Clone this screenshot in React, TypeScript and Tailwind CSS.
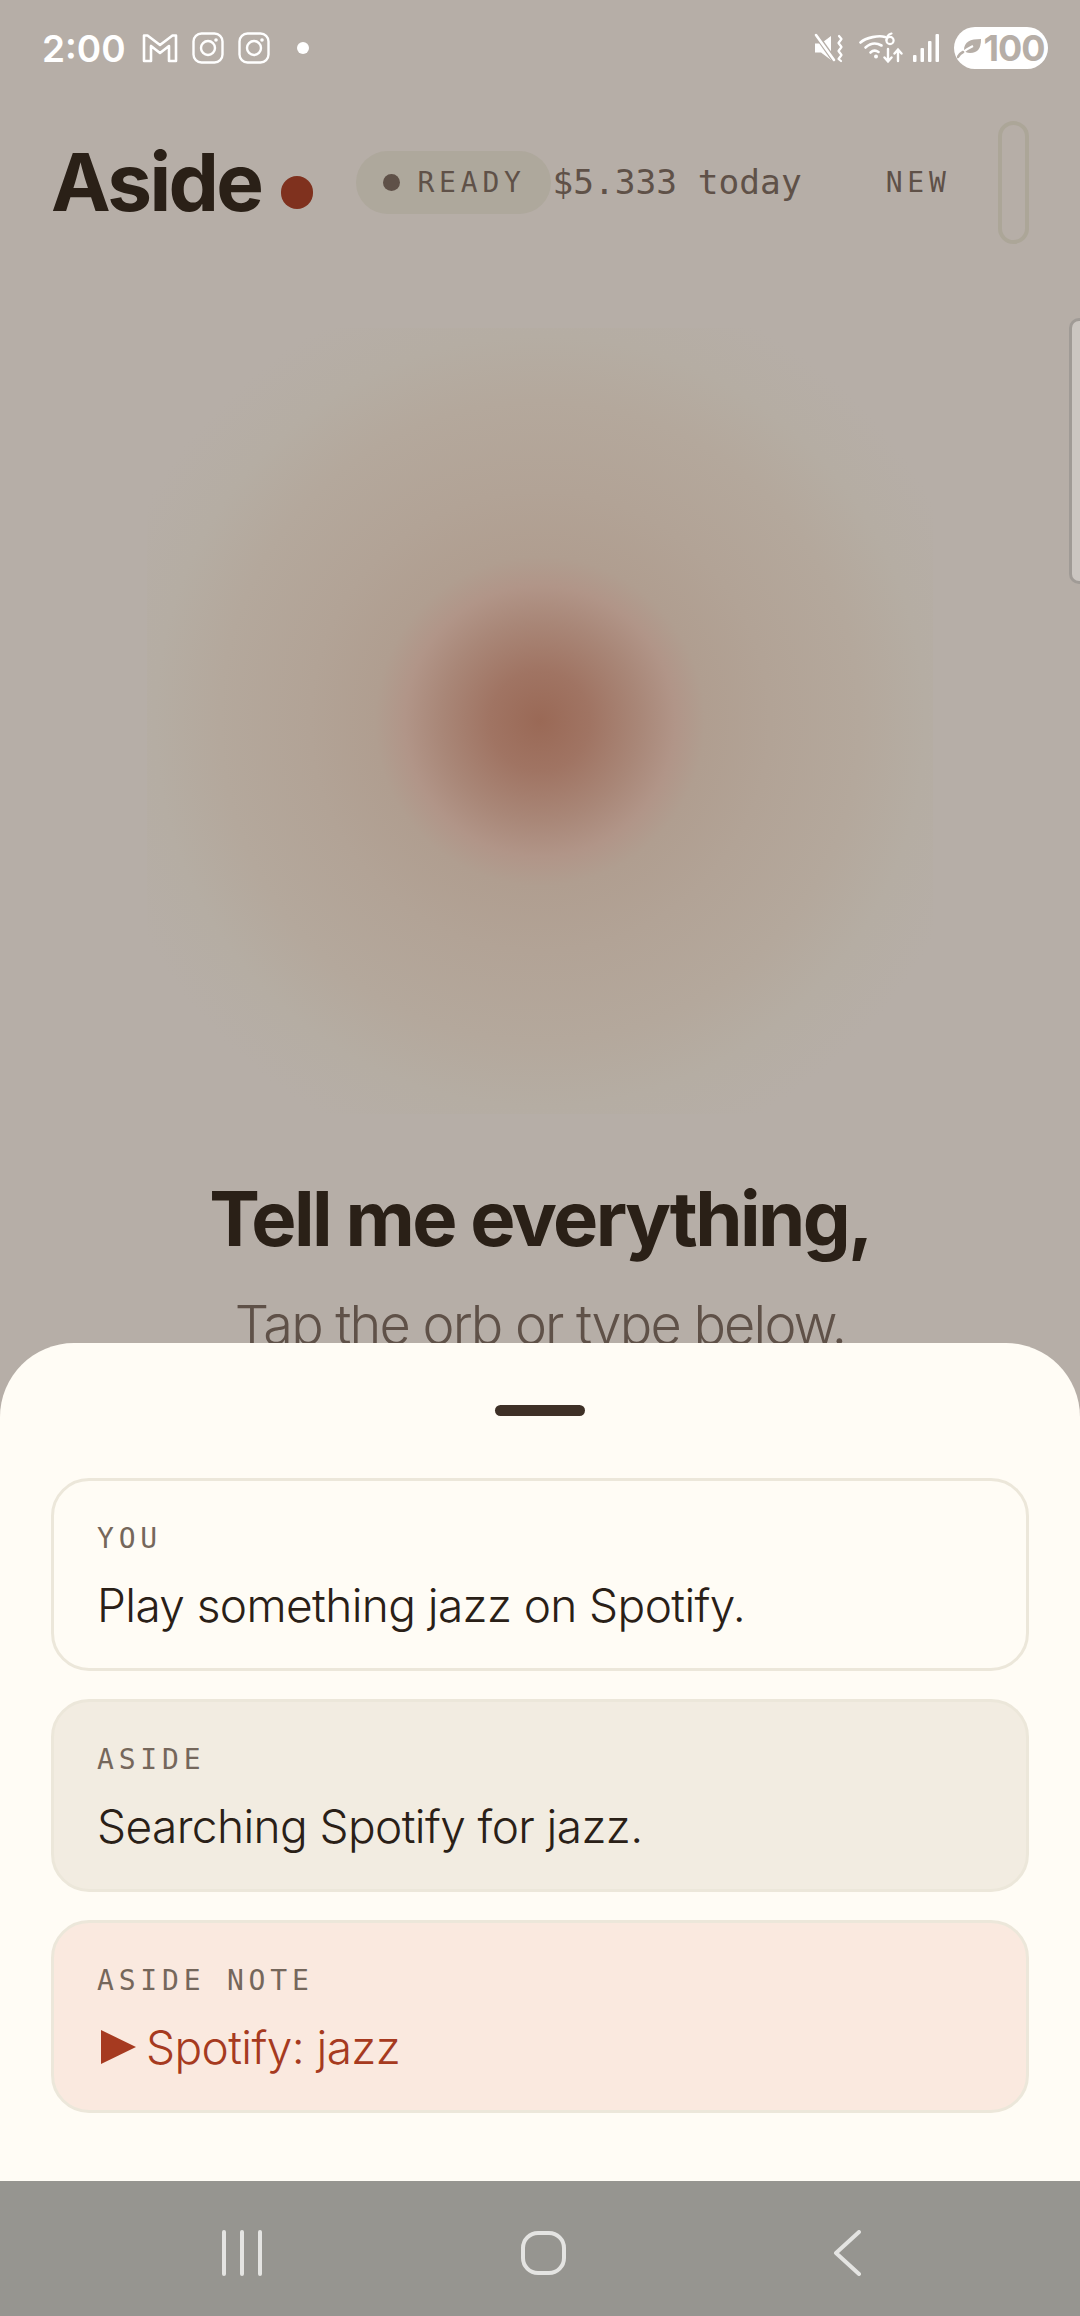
import React from 'react';

const SANS = "font-['Inter','Noto_Sans',sans-serif]";
const MONO = "font-['DejaVu_Sans_Mono',monospace]";

// Status bar glyphs
const GmailIcon = () => (
  <svg width="36" height="30" viewBox="0 0 36 30" fill="none" stroke="#fff" strokeWidth="2.6" strokeLinejoin="round">
    <path d="M2 2.5h3.5L18 12 30.500 2.500H34V28h-7V13l-9 7-9-7v15H2z" />
  </svg>
);

const InstaIcon = () => (
  <svg width="32" height="32" viewBox="0 0 32 32" fill="none" stroke="#fff" strokeWidth="2.400">
    <rect x="1.500" y="1.500" width="29" height="29" rx="8" />
    <circle cx="16" cy="16" r="7" />
    <circle cx="24" cy="8" r="1.800" fill="#fff" stroke="none" />
  </svg>
);

const MuteIcon = () => (
  <svg width="30" height="30" viewBox="0 0 30 30" fill="none">
    <path d="M1 10.500h6L17 3v24L7 19.500H1z" fill="#fff" />
    <path d="M3 3l17 24" stroke="#b6aea7" strokeWidth="5" />
    <path d="M2 2l18 25" stroke="#fff" strokeWidth="2.600" strokeLinecap="round" />
    <path d="M25 3l2.500 3-3 4 3 4-3 4 3 4-3 4 2.500 2" stroke="#fff" strokeWidth="2.200" strokeLinecap="round" strokeLinejoin="round" />
  </svg>
);

const WifiIcon = () => (
  <svg width="44" height="32" viewBox="0 0 44 32" fill="none" stroke="#fff" strokeLinecap="round" strokeWidth="2.600">
    <path d="M1.500 10.500C7 5.500 20 3 26 5" />
    <path d="M6.500 15.500c5-4.500 11-4.800 16-2" />
    <path d="M11.500 20.500c2.500-2.200 5.500-2.200 8-.5" />
    <circle cx="17" cy="24.500" r="2" fill="#fff" stroke="none" />
    <circle cx="31" cy="8.500" r="3.600" strokeWidth="2.200" />
    <path d="M27.500 8c0-3 1.500-5.500 5-6.500" strokeWidth="2.200" />
    <path d="M29 17v12M25.500 25.500L29 29.500l3.500-4M39 29V18M35.500 21.500L39 17.500l3.500 4" strokeWidth="2.400" />
  </svg>
);

const SignalIcon = () => (
  <svg width="27" height="30" viewBox="0 0 27 30" fill="#fff">
    <rect x="0" y="22" width="3.500" height="7" rx="1" />
    <rect x="7.500" y="15" width="3.500" height="14" rx="1" />
    <rect x="15" y="8" width="3.500" height="21" rx="1" />
    <rect x="22.500" y="1" width="3.500" height="28" rx="1" />
  </svg>
);

const LeafIcon = () => (
  <svg width="25" height="24" viewBox="0 0 25 24" fill="none">
    <path d="M7 14C7 6 13 3 24 3c0 9-3 14-11 14-3 0-5-1-6-3z" fill="#b6aea7" />
    <path d="M1 21c4-5 9-8 15-11" stroke="#fff" strokeWidth="2.200" />
    <path d="M1 21c1-2 3-4 5-5" stroke="#b6aea7" strokeWidth="2.600" strokeLinecap="round" />
  </svg>
);

const StatusBar = () => (
  <div className="flex items-center justify-between pl-[42px] pr-[32px] h-[96px]">
    <div className="flex items-center">
      <span className={`${SANS} text-[37px] font-semibold text-white leading-none`}>2:00</span>
      <div className="ml-[16px] flex items-center gap-[14px]">
        <GmailIcon />
        <InstaIcon />
        <InstaIcon />
      </div>
      <span className="ml-[27px] w-3 h-3 rounded-full bg-white" />
    </div>
    <div className="flex items-center">
      <MuteIcon />
      <div className="ml-[15px]"><WifiIcon /></div>
      <div className="ml-[10px]"><SignalIcon /></div>
      <div className="ml-[14px] flex items-center justify-center gap-[1px] w-[94px] h-[42px] rounded-full bg-white">
        <LeafIcon />
        <span className={`${SANS} text-[36px] font-bold text-[#b6aea7] leading-none tracking-[-1px]`}>100</span>
      </div>
    </div>
  </div>
);

const Header = () => (
  <div className="flex items-center h-[124px] mt-[24px] pl-[51px]">
    <h1 className={`${SANS} text-[80px] font-bold text-[#2a2017] tracking-[-2.600px] leading-none`}>Aside</h1>
    <span className="ml-[20px] mt-[20px] w-[32px] h-[33px] rounded-full bg-[#7f311e]" />
    <div className="ml-[43px] w-[195px] h-[63px] rounded-full bg-[#aea89c] flex items-center pl-[27px] shrink-0">
      <span className="w-[17px] h-[17px] rounded-full bg-[#5f5148]" />
      <span className={`${MONO} ml-[17px] mt-[2px] text-[28px] text-[#5f5148] tracking-[4.800px] leading-none`}>READY</span>
    </div>
    <span className={`${MONO} ml-[1px] text-[34.500px] text-[#5f5148] leading-none whitespace-nowrap`}>$5.333 today</span>
    <span className={`${MONO} ml-[84px] mt-[2px] text-[28px] text-[#5f5148] tracking-[4.800px] leading-none`}>NEW</span>
    <div className="ml-[47px] w-[31px] h-[123px] shrink-0 rounded-full border-[4px] border-[#aca698]" />
  </div>
);

const Orb = () => (
  <div className="mx-auto mt-[84px] w-[786px] h-[786px] bg-[radial-gradient(circle,#9a6956_0px,#a07463_50px,#a98778_100px,#b19588_135px,#b09e90_165px,#b2a396_230px,#b4a89c_320px,#b5ada3_385px,#b6aea7_450px)]" />
);

type CardProps = {
  label: string;
  tone: string;
  children: React.ReactNode;
};

const Card = ({ label, tone, children }: CardProps) => (
  <div className={`h-[193px] rounded-[38px] border-[3px] pl-[43px] pt-[40px] ${tone}`}>
    <div className={`${MONO} text-[28px] leading-[36px] tracking-[4.800px] text-[#75675b] whitespace-pre`}>{label}</div>
    {children}
  </div>
);

const Sheet = () => (
  <div className="bg-[#fffcf5] rounded-t-[74px] h-[838px] px-[51px] pt-[62px]">
    <div className="mx-auto w-[90px] h-[11px] rounded-full bg-[#3e3026]" />
    <div className={`${SANS} mt-[62px] flex flex-col gap-[28px] font-light text-[#2a2017]`}>
      <Card label="YOU" tone="bg-[#fffcf5] border-[#ece7da]">
        <p className="mt-[20px] text-[46px] leading-[56px] tracking-[-0.600px]">Play something jazz on Spotify.</p>
      </Card>
      <Card label="ASIDE" tone="bg-[#f2ece1] border-[#ece7da]">
        <p className="mt-[20px] text-[46px] leading-[56px] tracking-[-0.600px]">Searching Spotify for jazz.</p>
      </Card>
      <Card label="ASIDE NOTE" tone="bg-[#fae9df] border-[#ece7da]">
        <p className="mt-[20px] flex items-center text-[46px] leading-[56px] tracking-[-0.600px] text-[#a63a20]">
          <svg width="35" height="34" viewBox="0 0 35 34" className="ml-[4px] mr-[10px] shrink-0" fill="#a63a20">
            <path d="M0 0l35 17L0 34z" />
          </svg>
          Spotify: jazz
        </p>
      </Card>
    </div>
  </div>
);

const NavBar = () => (
  <div className="h-[135px] bg-[#969590] flex items-center pl-[222px] pt-[9px]">
    <svg width="40" height="46" viewBox="0 0 40 46" fill="none" stroke="#e4e4e2" strokeWidth="4" strokeLinecap="round">
      <path d="M2 2v42M20 2v42M38 2v42" />
    </svg>
    <svg width="47" height="46" viewBox="0 0 47 46" fill="none" stroke="#e4e4e2" strokeWidth="4" className="ml-[258px]">
      <rect x="3" y="3" width="41" height="40" rx="15" />
    </svg>
    <svg width="28" height="46" viewBox="0 0 28 46" fill="none" stroke="#e4e4e2" strokeWidth="4" strokeLinecap="round" strokeLinejoin="round" className="ml-[266px]">
      <path d="M26 2L3 23l23 21" />
    </svg>
  </div>
);

export default function App() {
  return (
    <div className="relative w-[1080px] h-[2316px] overflow-hidden bg-[#b6aea7]">
      <main className="h-[1343px] overflow-hidden">
        <StatusBar />
        <Header />
        <Orb />
        <div className={`${SANS} text-center`}>
          <h2 className="mt-[60px] text-[76px] font-bold text-[#2a2017] tracking-[-2.600px] leading-[88px]">Tell me everything,</h2>
          <p className="mt-[33px] text-[54px] font-light text-[#5f5148] tracking-[-1.800px] leading-[60px]">Tap the orb or type below.</p>
        </div>
      </main>
      <Sheet />
      <NavBar />
      {/* Edge panel handle sits on top of the page */}
      <div className="absolute right-0 top-[318px] w-[11px] h-[266px] rounded-l-[10px] bg-[#cbc6c1] border-l-[3px] border-y-[3px] border-[#a09b96]" />
    </div>
  );
}
